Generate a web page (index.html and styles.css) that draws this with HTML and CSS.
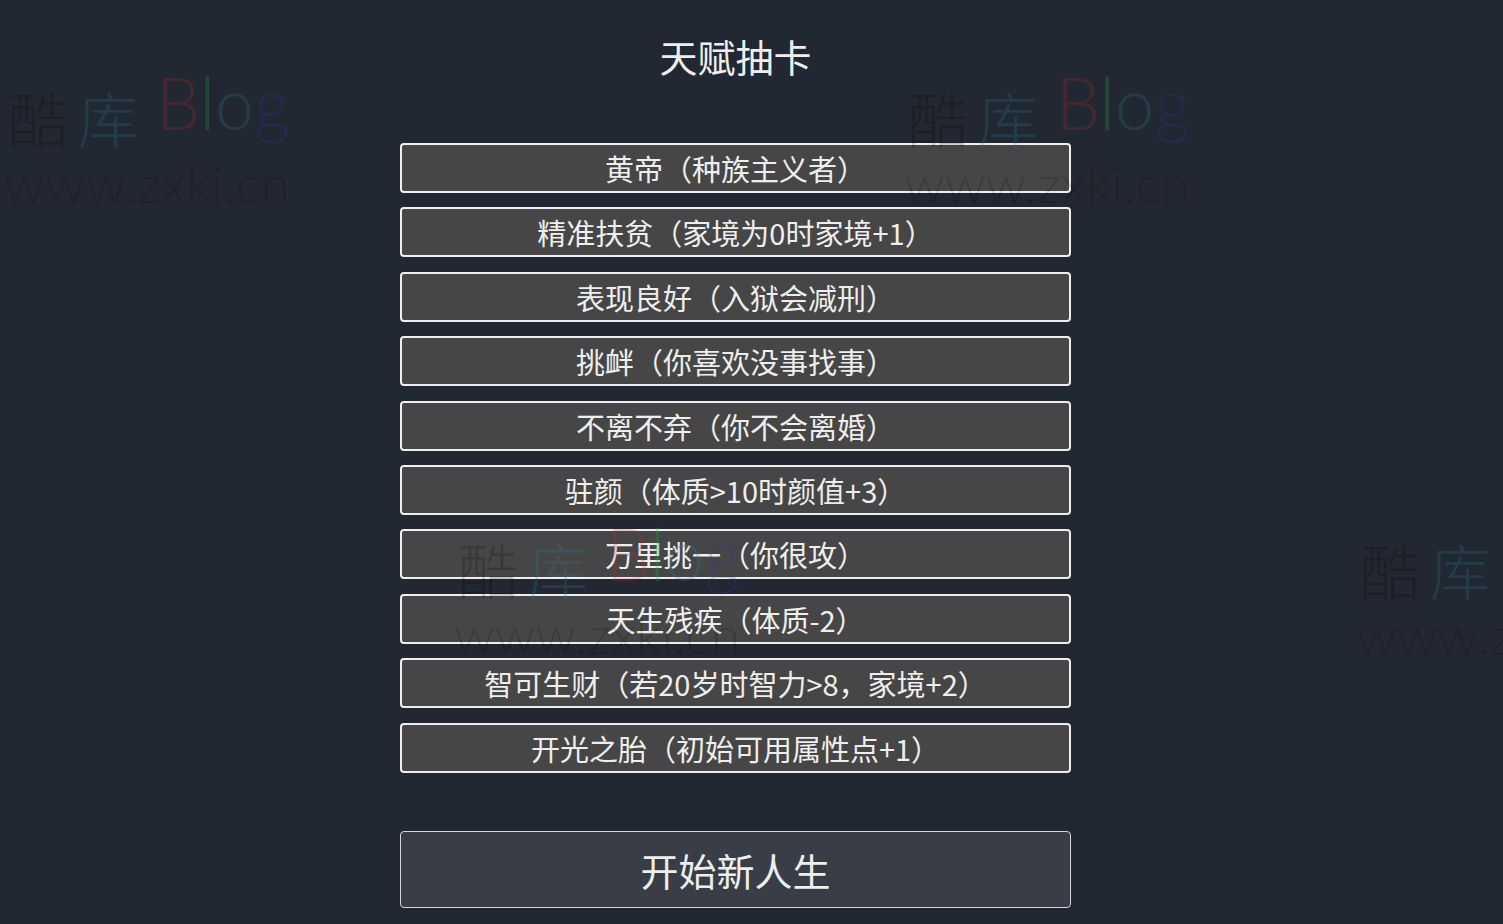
FILE: index.html
```html
<!DOCTYPE html>
<html lang="zh-CN">
<head>
<meta charset="utf-8">
<title>天赋抽卡</title>
<link rel="stylesheet" href="styles.css">
</head>
<body>
<main class="page">
  <h1 class="title">天赋抽卡</h1>
  <ul class="talents">
    <li class="talent">黄帝（种族主义者）</li>
    <li class="talent">精准扶贫（家境为0时家境+1）</li>
    <li class="talent">表现良好（入狱会减刑）</li>
    <li class="talent">挑衅（你喜欢没事找事）</li>
    <li class="talent">不离不弃（你不会离婚）</li>
    <li class="talent">驻颜（体质&gt;10时颜值+3）</li>
    <li class="talent">万里挑一（你很攻）</li>
    <li class="talent">天生残疾（体质-2）</li>
    <li class="talent">智可生财（若20岁时智力&gt;8，家境+2）</li>
    <li class="talent">开光之胎（初始可用属性点+1）</li>
  </ul>
  <button class="start">开始新人生</button>
</main>

<div class="watermarks" aria-hidden="true">
  <svg class="wm wm-1" width="300" height="150" viewBox="0 0 300 150">
    <text class="wm-cn" x="8" y="68"><tspan class="c-dark">酷</tspan><tspan class="c-teal" dx="10">库</tspan></text>
    <text class="wm-en" x="156" y="55" textLength="134" lengthAdjust="spacingAndGlyphs"><tspan class="c-red">B</tspan><tspan class="c-green">l</tspan><tspan class="c-teal">o</tspan><tspan class="c-navy">g</tspan></text>
    <text class="wm-url" x="4" y="128" textLength="286" lengthAdjust="spacingAndGlyphs">www.zxki.cn</text>
  </svg>
  <svg class="wm wm-2" width="300" height="150" viewBox="0 0 300 150">
    <text class="wm-cn" x="8" y="68"><tspan class="c-dark">酷</tspan><tspan class="c-teal" dx="10">库</tspan></text>
    <text class="wm-en" x="156" y="55" textLength="134" lengthAdjust="spacingAndGlyphs"><tspan class="c-red">B</tspan><tspan class="c-green">l</tspan><tspan class="c-teal">o</tspan><tspan class="c-navy">g</tspan></text>
    <text class="wm-url" x="4" y="128" textLength="286" lengthAdjust="spacingAndGlyphs">www.zxki.cn</text>
  </svg>
  <svg class="wm wm-3" width="300" height="150" viewBox="0 0 300 150">
    <text class="wm-cn" x="8" y="68"><tspan class="c-dark">酷</tspan><tspan class="c-teal" dx="10">库</tspan></text>
    <text class="wm-en" x="156" y="55" textLength="134" lengthAdjust="spacingAndGlyphs"><tspan class="c-red">B</tspan><tspan class="c-green">l</tspan><tspan class="c-teal">o</tspan><tspan class="c-navy">g</tspan></text>
    <text class="wm-url" x="4" y="128" textLength="286" lengthAdjust="spacingAndGlyphs">www.zxki.cn</text>
  </svg>
  <svg class="wm wm-4" width="300" height="150" viewBox="0 0 300 150">
    <text class="wm-cn" x="8" y="68"><tspan class="c-dark">酷</tspan><tspan class="c-teal" dx="10">库</tspan></text>
    <text class="wm-en" x="156" y="55" textLength="134" lengthAdjust="spacingAndGlyphs"><tspan class="c-red">B</tspan><tspan class="c-green">l</tspan><tspan class="c-teal">o</tspan><tspan class="c-navy">g</tspan></text>
    <text class="wm-url" x="4" y="128" textLength="286" lengthAdjust="spacingAndGlyphs">www.zxki.cn</text>
  </svg>
</div>
</body>
</html>
```

FILE: styles.css
```css
html, body {
  height: 100%;
}

body {
  margin: 0;
  padding: 0 32px 0 0;
  position: relative;
  overflow: hidden;
  background: #222831;
  color: #eeeeee;
  font-family: "Noto Sans CJK SC", "Noto Sans", sans-serif;
}

.page {
  width: 671px;
  margin: 0 auto;
  padding-top: 36px;
  display: flex;
  flex-direction: column;
}

.title {
  margin: 0 0 67px;
  font-size: 38px;
  line-height: 40px;
  font-weight: 400;
  text-align: center;
}

.talents {
  list-style: none;
  margin: 0;
  padding: 0;
  display: flex;
  flex-direction: column;
  gap: 14.4px;
}

.talent {
  box-sizing: border-box;
  height: 50px;
  border: 2px solid #eeeeee;
  border-radius: 4px;
  background: #464646;
  font-size: 29px;
  line-height: 46px;
  text-align: center;
  white-space: nowrap;
}

.start {
  box-sizing: border-box;
  margin-top: 58px;
  height: 77px;
  width: 100%;
  border: 1px solid #d6d6d6;
  border-radius: 4px;
  background: #393e46;
  color: #eeeeee;
  font-family: inherit;
  font-size: 38px;
  line-height: 75px;
  padding: 0;
}

/* watermark overlay */
.watermarks {
  position: absolute;
  inset: 0;
  pointer-events: none;
  overflow: hidden;
}

.wm {
  position: absolute;
  overflow: visible;
}

.wm-1 { left: 0; top: 75px; }
.wm-2 { left: 900px; top: 75px; }
.wm-3 { left: 450px; top: 526px; }
.wm-4 { left: 1352px; top: 527px; }

.wm-cn {
  font-family: "Noto Sans CJK SC", sans-serif;
  font-size: 60px;
  font-weight: 300;
}

.wm-en {
  font-family: "Lato", "Open Sans", sans-serif;
  font-size: 72px;
  font-weight: 300;
}

.wm-url {
  font-family: "Lato", "Open Sans", sans-serif;
  font-size: 52px;
  font-weight: 300;
  fill: rgba(0, 0, 0, 0.13);
}

.c-dark { fill: rgba(0, 0, 0, 0.18); }
.c-teal { fill: rgba(40, 125, 165, 0.24); }
.c-red { fill: rgba(200, 40, 45, 0.2); }
.c-green { fill: rgba(40, 170, 70, 0.26); }
.c-navy { fill: rgba(45, 55, 165, 0.22); }
```
